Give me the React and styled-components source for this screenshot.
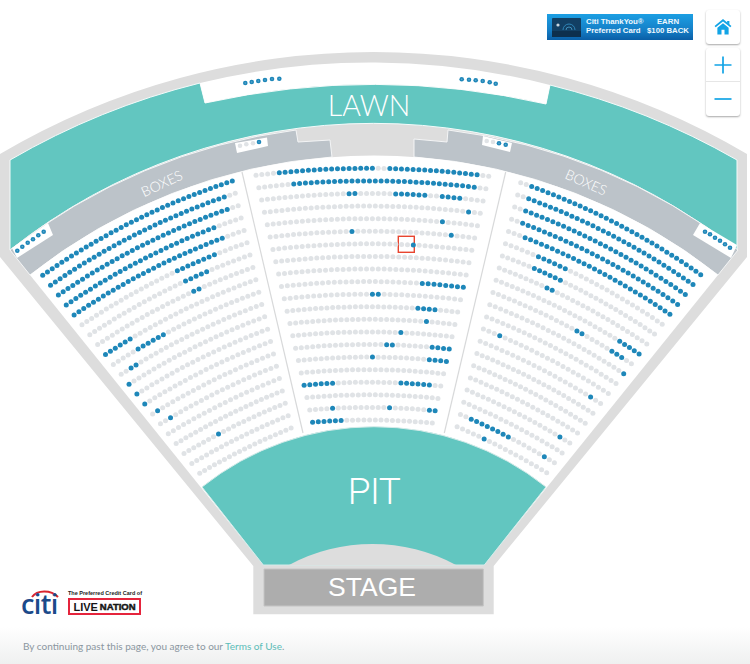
import React from "react";
import styled, { createGlobalStyle } from "styled-components";

const Global = createGlobalStyle`
  html, body { margin: 0; padding: 0; background: #fff; }
`;

const Page = styled.div`
  width: 750px;
  height: 664px;
  display: flex;
  flex-direction: column;
  overflow: hidden;
  font-family: "Lato", "Liberation Sans", sans-serif;
`;
const MapArea = styled.div`
  position: relative;
  flex: 1;
`;
const MapSvg = styled.svg`
  display: block;
  width: 750px;
  height: 620px;
`;
const Shape = styled.path`
  fill: ${(p) => p.$fill};
  stroke: ${(p) => p.$line || "none"};
  stroke-width: 1;
`;
const Tab = styled.polygon`
  fill: #fff;
`;
const Divider = styled.line`
  stroke: #d8d9da;
  stroke-width: 1.2;
`;
const Seat = styled.circle`
  fill: ${(p) => (p.$taken ? "#1e87b9" : "#e0e3e6")};
`;
const BoxCore = styled.circle`
  fill: #62a9cc;
`;
const Focus = styled.rect`
  fill: none;
  stroke: #e8452f;
  stroke-width: 1.4;
`;
const AreaLabel = styled.text`
  fill: #fff;
  text-anchor: middle;
  font-family: ${(p) => p.$font};
  font-weight: ${(p) => p.$weight};
  font-size: ${(p) => p.$size}px;
  letter-spacing: ${(p) => p.$track || 0}px;
`;

const Banner = styled.div`
  position: absolute;
  top: 14px;
  right: 57px;
  width: 146px;
  height: 26px;
  box-sizing: border-box;
  padding: 3px 4px 3px 5px;
  display: flex;
  align-items: center;
  color: #eef7fd;
  font-family: "Liberation Sans", sans-serif;
  font-weight: 700;
  font-size: 7.8px;
  line-height: 8.6px;
  background: linear-gradient(#1c9fe3 0%, #1580c8 60%, #0a5ea6 100%);
`;
const CardArt = styled.svg`
  width: 29px;
  height: 19px;
  flex: none;
  margin-right: 5px;
`;
const BannerText = styled.div`
  flex: 1;
  white-space: nowrap;
`;
const BannerEarn = styled.div`
  text-align: center;
  white-space: nowrap;
`;

const Controls = styled.div`
  position: absolute;
  top: 10px;
  right: 10px;
  display: flex;
  flex-direction: column;
  gap: 4px;
`;
const Card = styled.div`
  width: 34px;
  background: #fff;
  border-radius: 3px;
  box-shadow: 0 1px 2px rgba(0, 0, 0, 0.35);
  display: flex;
  flex-direction: column;
`;
const CtrlBtn = styled.div`
  height: ${(p) => p.$h}px;
  display: flex;
  align-items: center;
  justify-content: center;
  & + & {
    border-top: 1px solid #e6e6e6;
  }
`;
const CtrlIcon = styled.svg`
  display: block;
  width: ${(p) => p.$s}px;
  height: ${(p) => p.$s}px;
  color: #12a4e6;
`;

const Sponsor = styled.div`
  position: absolute;
  left: 22px;
  top: 588px;
  display: flex;
  align-items: flex-end;
  gap: 10px;
`;
const CitiMark = styled.div`
  position: relative;
  width: 36px;
  height: 27px;
`;
const CitiArc = styled.svg`
  position: absolute;
  left: 9px;
  top: 1px;
  width: 28px;
  height: 9px;
`;
const CitiWord = styled.div`
  position: absolute;
  left: -1px;
  bottom: -4px;
  font-family: "Open Sans", sans-serif;
  font-weight: 600;
  font-size: 27px;
  line-height: 30px;
  letter-spacing: -0.6px;
  color: #1b4a8a;
`;
const SponsorCol = styled.div`
  display: flex;
  flex-direction: column;
  gap: 1px;
`;
const Tagline = styled.div`
  font-family: "Liberation Sans", sans-serif;
  font-weight: 700;
  font-size: 5.5px;
  line-height: 7px;
  color: #222;
  white-space: nowrap;
`;
const LiveBox = styled.div`
  box-sizing: border-box;
  width: 73px;
  height: 17px;
  border: 2px solid #e5243c;
  display: flex;
  align-items: center;
  justify-content: center;
  gap: 2px;
  font-family: "Liberation Sans", sans-serif;
  font-weight: 700;
  color: #161616;
`;
const Live = styled.span`
  font-size: 11px;
`;
const Nation = styled.span`
  font-size: 9.5px;
  font-weight: 700;
  -webkit-text-stroke: 0.5px #161616;
`;

const Footer = styled.footer`
  flex: 0 0 44px;
  box-sizing: border-box;
  padding: 20px 0 0 23px;
  font-size: 10px;
  line-height: 13px;
  color: #8b96a0;
  background: linear-gradient(#fff 0%, #fff 15%, #eff0f0 100%);
`;
const TermsLink = styled.a`
  color: #5cbdb8;
  text-decoration: none;
`;

const centerBlue = {
  1: [[4, 20], [23, 38]], 2: [[6, 37]], 3: [[15, 16], [23, 28], [31, 34]], 4: [[35, 35]], 5: [[30, 30]],
  6: [[14, 14], [31, 31]], 7: [[24, 24]], 10: [[24, 31]], 11: [[15, 16]], 12: [[23, 26]], 13: [[24, 24]],
  14: [[19, 19]], 15: [[16, 17], [24, 27]], 16: [[13, 13], [23, 26]], 18: [[0, 5], [17, 22]],
  20: [[4, 4], [14, 14], [21, 22]], 21: [[0, 5]],
};
const centerCounts = [41, 40, 39, 38, 37, 36, 35, 34, 33, 32, 31, 31, 30, 29, 28, 27, 26, 25, 24, 23, 22];

/* taken seats on the side blocks, as x ranges along each row */
const leftBlue = {
  1: [[0, 999]], 2: [[0, 225]], 3: [[0, 228]], 4: [[0, 214.7]], 5: [[0, 222.7]], 6: [[179.3, 215]],
  7: [[187.3, 208.3]], 8: [[195.7, 201]], 9: [[105.7, 128.3]], 10: [[136, 164.3]], 11: [[130.3, 135.3]],
  12: [[129, 129]], 13: [[136.7, 136.7]], 14: [[144.7, 144.7]], 15: [[157.7, 157.7]], 16: [[170, 170]], 19: [[220, 220]],
};
const rightBlue = {
  1: [[530.7, 999]], 2: [[527.7, 999]], 3: [[525, 999]], 4: [[522, 999]], 5: [[524.3, 999]], 6: [[536.7, 567.3]],
  7: [[534, 559.3]], 8: [[546, 551.3]], 9: [[617.7, 640]], 10: [[575.7, 580.7], [609.7, 624]], 11: [[626, 626]],
  13: [[500.3, 500.3]], 14: [[593, 593]], 18: [[561, 561]], 20: [[471.7, 509], [544.7, 544.7]], 21: [[484.7, 484.7]],
};

function rowSeats(L, R, sag, count, taken) {
  const dx = R[0] - L[0];
  const dy = R[1] - L[1];
  const c = Math.hypot(dx, dy);
  const nx = dy / c;
  const ny = -dx / c;
  const out = [];
  for (let i = 0; i < count; i++) {
    const t = i / (count - 1);
    const b = 4 * t * (1 - t) * sag;
    const x = L[0] + dx * t + nx * b;
    out.push({ x, y: L[1] + dy * t + ny * b, taken: taken(i, x) });
  }
  return out;
}
const byIndex = (ranges = []) => (i) => ranges.some(([a, z]) => i >= a && i <= z);
const byX = (ranges = []) => (_, x) => ranges.some(([a, z]) => x >= a - 2.4 && x <= z + 2.4);

function sideRow(L, R, ranges) {
  const c = Math.hypot(R[0] - L[0], R[1] - L[1]);
  return rowSeats(L, R, (c * c) / 5600, Math.round(c / 5.83 + 0.2) + 1, byX(ranges));
}

function buildSeats() {
  const all = [];
  for (let n = 1; n <= 21; n++) {
    const k = n - 1;
    const cL = [256 + 2.83 * k, 175.3 + 12.35 * k];
    const cR = [488.7 - 2.82 * k, 176.3 + 12.34 * k];
    const mid = 168.3 + 12.585 * k;
    all.push(...rowSeats(cL, cR, (cL[1] + cR[1]) / 2 - mid, centerCounts[k], byIndex(centerBlue[n])));
    all.push(...sideRow([42.7 + 7.85 * k, 275.3 + 9.9 * k], [232.3 + 2.94 * k, 181 + 12.35 * k], leftBlue[n]));
    all.push(...sideRow([520.7 - 3 * k - 0.009 * k * k, 182.7 + 12.2 * k], [700.7 - 7.7 * k, 274.7 + 9.9 * k], rightBlue[n]));
  }
  return all;
}
const seats = buildSeats();

const boxSeats = [
  [245.3, 83, 1], [251.7, 82, 1], [258.3, 81, 1], [265, 80, 1], [272, 79, 1], [279.3, 78.7, 1],
  [461.7, 79.3, 1], [469, 79.7, 1], [475.7, 80.3, 1], [482.7, 81, 1], [489.7, 82.3, 1], [495.7, 83.7, 1],
  [17.3, 250.7, 1], [22.3, 246.7, 1], [27.7, 242.7, 1], [33, 239.3, 1], [38.3, 235.3, 1], [43.7, 231.7, 1],
  [705, 231.7, 1], [710, 234.3, 1], [715, 237.7, 1], [720, 240.7, 1], [725, 244.3, 1], [730, 247.7, 1],
  [240, 145.7, 0], [246.3, 144.3, 0], [253, 143.3, 0], [259, 142, 1],
  [486.7, 141, 0], [493, 142, 0], [499, 143.3, 1], [505.7, 144.7, 1],
];

function SeatMap() {
  return (
    <MapSvg viewBox="0 0 750 620">
      <Shape $fill="#dddddd" d="M0 154 A735 735 0 0 1 747 154 L747 257 L493.7 566 L493.7 614.3 L253.3 614.3 L253.3 566 L0 257 Z" />
      <Shape $fill="#62c6c0" $line="#f4fbfa" d="M10 160 A725 725 0 0 1 200 83 L205 103 A779 779 0 0 1 546 104 L550 85 A725 725 0 0 1 737 160 L737 250 A585 585 0 0 0 10 250 Z" />
      <Shape $fill="#ffffff" d="M200 83 A725 725 0 0 1 550 85 L546 104 A779 779 0 0 0 205 103 Z" />
      <Shape $fill="#bcc3c9" $line="#f4f5f6" d="M10 250 A585 585 0 0 1 296 130 L298 142 L330 140 L332 157 A555 555 0 0 0 30 275 Z" />
      <Shape $fill="#bcc3c9" $line="#f4f5f6" d="M738 250 A585 585 0 0 0 448 130 L447 142 L414 139 L414 157 A555 555 0 0 1 718 275 Z" />
      <Shape $fill="#ffffff" d="M30 275 A555 555 0 0 1 718 275 L484.3 565 L263.3 565 Z" />
      <Tab points="235,143 267,137.5 268,146 237,153" />
      <Tab points="483,136 512,143 510,152 482,145" />
      <Tab points="48,223 53,235 17,258 12,248" />
      <Tab points="700,223 737,245 731,258 693,235" />
      <Divider x1="242" y1="172" x2="303" y2="433" />
      <Divider x1="505.7" y1="172" x2="444.3" y2="433" />
      <Shape $fill="#62c6c0" $line="#d5ebe9" d="M202 487 A275.5 275.5 0 0 1 546 487 L484.3 565 L263.3 565 Z" />
      <Shape $fill="#dddddd" d="M289 565 A176.5 176.5 0 0 1 456 565 Z" />
      <Shape $fill="#adadad" $line="#c4c4c4" d="M264 569 H483.3 V606 H264 Z" />
      <Focus x="398.3" y="236.3" width="16" height="16" />
      {seats.map((s, i) => (
        <Seat key={i} cx={s.x} cy={s.y} r={2.5} $taken={s.taken} />
      ))}
      {boxSeats.map(([x, y, on], i) => (
        <g key={i}>
          <Seat cx={x} cy={y} r={2.3} $taken={!!on} />
          {on ? <BoxCore cx={x} cy={y} r={0.8} /> : null}
        </g>
      ))}
      <AreaLabel $font={'"Lato", sans-serif'} $weight={300} $size={28.5} x="369" y="116">LAWN</AreaLabel>
      <AreaLabel $font={'"Lato", sans-serif'} $weight={300} $size={14} transform="translate(164 188) rotate(-25)">BOXES</AreaLabel>
      <AreaLabel $font={'"Lato", sans-serif'} $weight={300} $size={14} transform="translate(584 187) rotate(24)">BOXES</AreaLabel>
      <AreaLabel $font={'"Roboto", sans-serif'} $weight={300} $size={37} $track={-0.6} x="374" y="504">PIT</AreaLabel>
      <AreaLabel $font={'"Liberation Sans", sans-serif'} $weight={400} $size={26.5} x="372" y="596">STAGE</AreaLabel>
    </MapSvg>
  );
}

export default function App() {
  return (
    <Page>
      <Global />
      <MapArea>
        <SeatMap />
        <Banner>
          <CardArt viewBox="0 0 29 19">
            <rect width="29" height="19" rx="1" fill="#123f63" />
            <rect y="13" width="29" height="6" fill="#0d2f4d" />
            <path d="M11 12a6 6 0 0 1 12 0" fill="none" stroke="#2e86b8" strokeWidth="1" />
            <path d="M14 12a3 3 0 0 1 6 0" fill="none" stroke="#4ba3cf" strokeWidth="0.8" />
            <circle cx="6" cy="7" r="1.6" fill="#c9d6df" />
          </CardArt>
          <BannerText>Citi ThankYou®<br />Preferred Card</BannerText>
          <BannerEarn>EARN<br />$100 BACK</BannerEarn>
        </Banner>
        <Controls>
          <Card>
            <CtrlBtn $h={34}>
              <CtrlIcon $s={18} viewBox="0 0 24 24">
                <path d="M1.5 11.5 12 3l10.5 8.5" fill="none" stroke="currentColor" strokeWidth="2.4" />
                <path d="M17.5 4h3v5l-3-2.4z" fill="currentColor" />
                <path d="M4.5 13 12 7l7.500 6v9h-5.500v-6.500h-4V22H4.500z" fill="currentColor" />
              </CtrlIcon>
            </CtrlBtn>
          </Card>
          <Card>
            <CtrlBtn $h={33}>
              <CtrlIcon $s={18} viewBox="0 0 18 18">
                <path d="M0.500 9h17M9 0.500v17" fill="none" stroke="currentColor" strokeWidth="1.7" />
              </CtrlIcon>
            </CtrlBtn>
            <CtrlBtn $h={34}>
              <CtrlIcon $s={18} viewBox="0 0 18 18">
                <path d="M0.500 9h17" fill="none" stroke="currentColor" strokeWidth="1.7" />
              </CtrlIcon>
            </CtrlBtn>
          </Card>
        </Controls>
        <Sponsor>
          <CitiMark>
            <CitiArc viewBox="0 0 28 9">
              <path d="M1 8C6 0.500 20 0.500 27 8" fill="none" stroke="#d9262e" strokeWidth="2" />
            </CitiArc>
            <CitiWord>citi</CitiWord>
          </CitiMark>
          <SponsorCol>
            <Tagline>The Preferred Credit Card of</Tagline>
            <LiveBox><Live>LIVE</Live><Nation>NATION</Nation></LiveBox>
          </SponsorCol>
        </Sponsor>
      </MapArea>
      <Footer>
        By continuing past this page, you agree to our <TermsLink href="#">Terms of Use</TermsLink>.
      </Footer>
    </Page>
  );
}
